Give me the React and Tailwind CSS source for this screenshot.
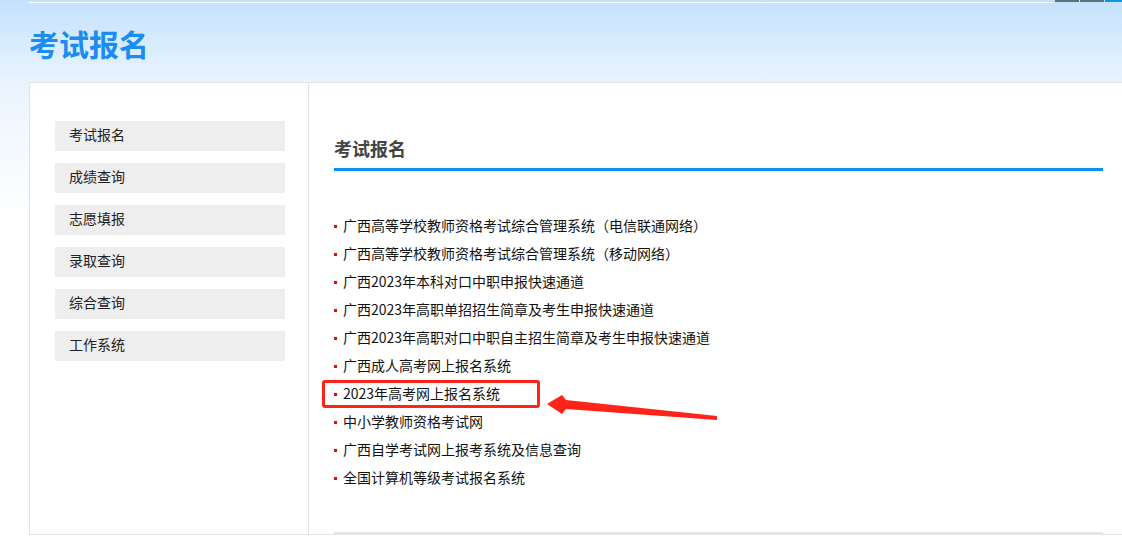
const navItems = ["考试报名", "成绩查询", "志愿填报", "录取查询", "综合查询", "工作系统"];

const links = [
  "广西高等学校教师资格考试综合管理系统（电信联通网络）",
  "广西高等学校教师资格考试综合管理系统（移动网络）",
  "广西2023年本科对口中职申报快速通道",
  "广西2023年高职单招招生简章及考生申报快速通道",
  "广西2023年高职对口中职自主招生简章及考生申报快速通道",
  "广西成人高考网上报名系统",
  "2023年高考网上报名系统",
  "中小学教师资格考试网",
  "广西自学考试网上报考系统及信息查询",
  "全国计算机等级考试报名系统",
];

export default function App() {
  return (
    <div
      className="relative w-[1122px] h-[541px] overflow-hidden bg-[linear-gradient(to_bottom,#c4e1fc_0px,#d6ebfd_40px,#eaf4fe_82px,#ffffff_220px)]"
      style={{ fontFamily: '"Noto Sans CJK SC", "Noto Sans", sans-serif' }}
    >
      {/* top strip */}
      <div className="flex h-[3px] items-start">
        <div className="ml-[29px] mt-[2px] h-px w-[1024px] bg-white" />
        <div className="ml-[2px] h-[2px] w-[24px] bg-[#5c6f7e]" />
        <div className="ml-px h-[2px] w-[24px] bg-[#5c6f7e]" />
        <div className="ml-px h-[2px] flex-1 bg-[#0b98e8]" />
      </div>

      {/* header */}
      <div className="flex h-[79px] items-center pl-[29px]">
        <h1 className="text-[30px] font-bold leading-none text-[#1b8cf2]">考试报名</h1>
      </div>

      {/* main box */}
      <div className="ml-[29px] flex h-[453px] w-[1110px] border border-[#e3e3e3] bg-white">
        <aside className="w-[279px] shrink-0 border-r border-[#e3e3e3] pt-[38px] pl-[25px]">
          <ul className="flex flex-col gap-[12px]">
            {navItems.map((n) => (
              <li
                key={n}
                className="flex h-[30px] w-[230px] items-center bg-[#eeeeee] pb-[3px] pl-[14px] text-[14px] text-[#222]"
              >
                {n}
              </li>
            ))}
          </ul>
        </aside>

        <section className="flex flex-1 flex-col pl-[25px]">
          <div className="mt-[53px] w-[769px] border-b-[3px] border-[#0a8ff5] pb-[7px]">
            <h2 className="text-[18px] font-bold leading-[25px] text-[#444]">考试报名</h2>
          </div>

          <ul className="mt-[41px] flex flex-col">
            {links.map((t, i) => (
              <li key={t} className="relative flex h-[28px] items-center pb-[2px] text-[14px] text-[#111]">
                <span className="mr-[6px] mt-[2px] h-[3px] w-[3px] bg-[#ff0000]" />
                {t}
                {i === 6 && (
                  <span className="absolute left-[-12px] top-0 h-[28px] w-[218px] rounded-[3px] border-[3px] border-[#ff2419]" />
                )}
              </li>
            ))}
          </ul>

          <div className="mt-auto h-[2px] w-[769px] bg-[#e6e6e6]" />
        </section>
      </div>

      {/* annotation arrow */}
      <svg className="absolute left-0 top-0" width="1122" height="541" viewBox="0 0 1122 541">
        <polygon
          points="547,404 562,395 566,400 717,416 717,420 566,409 562,414"
          fill="#ff2419"
        />
      </svg>
    </div>
  );
}
